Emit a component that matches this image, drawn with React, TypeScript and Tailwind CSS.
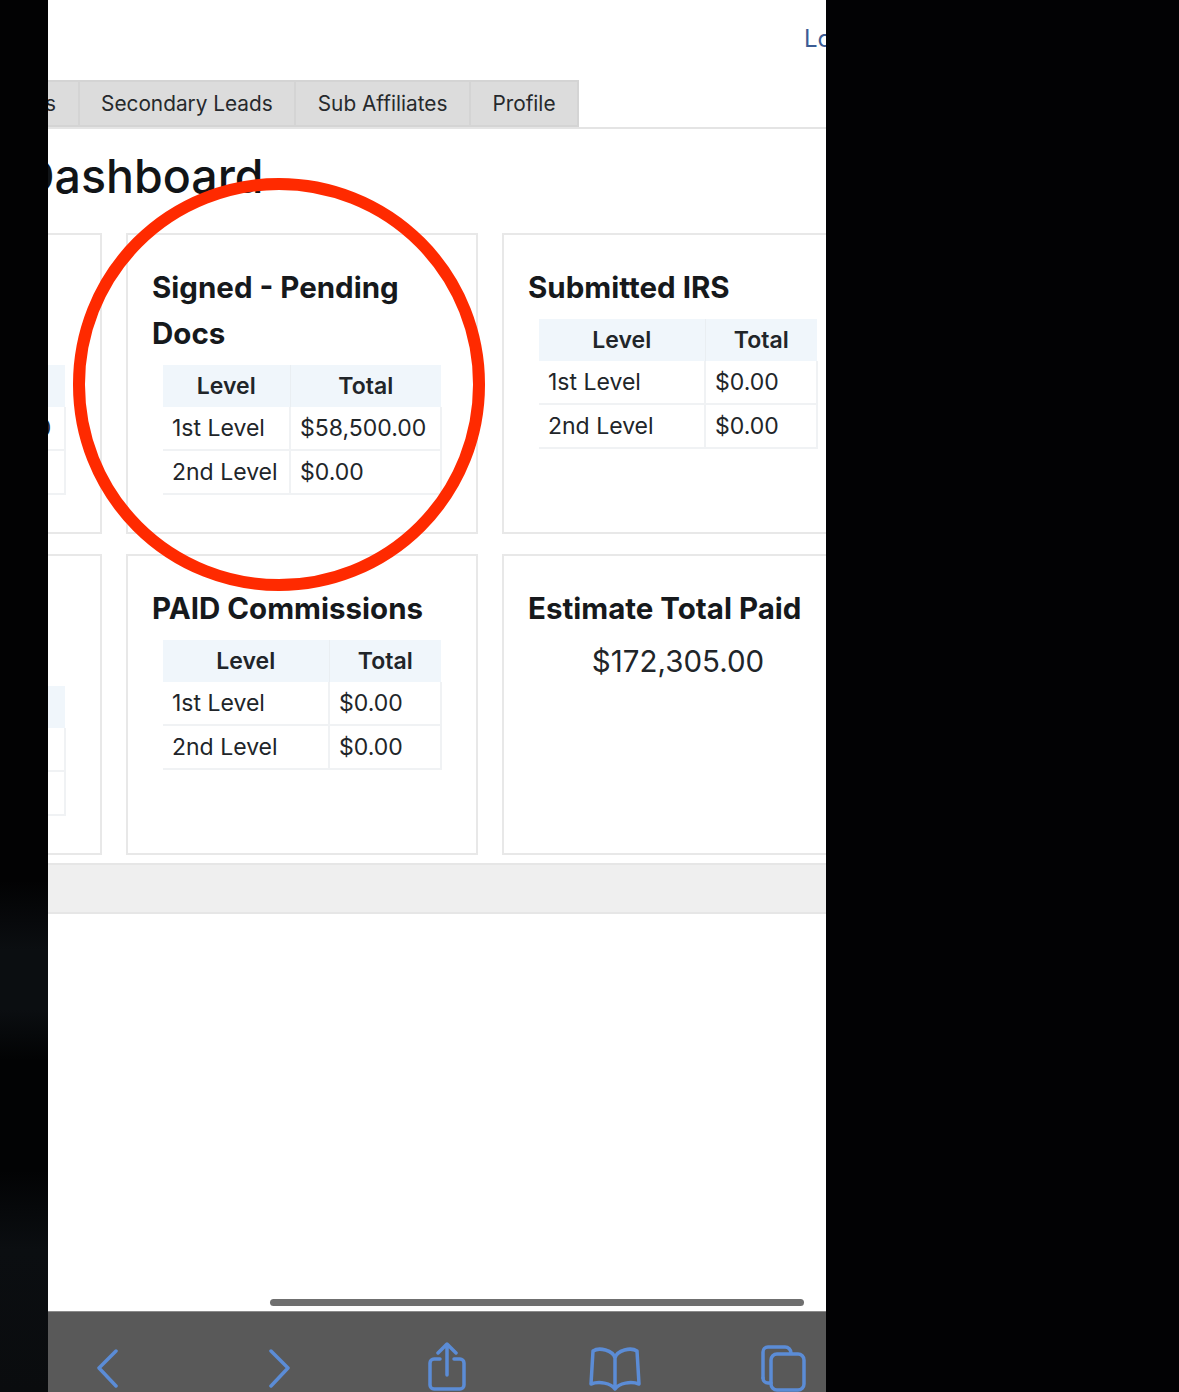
const FONT = "font-['Inter','Liberation_Sans',sans-serif]";

interface Row {
  level: string;
  total: string;
}

interface CardProps {
  title: string;
  rows: Row[];
  levelWidth: string;
}

function StatCard({ title, rows, levelWidth }: CardProps) {
  return (
    <div className="h-[301px] border-2 border-[#e8e8e8] bg-white pl-[24px] pr-[34px] pt-[29px]">
      <h3 className="text-[29.5px] font-bold leading-[46px] text-[#16191c]">{title}</h3>
      <table className="ml-[11px] mt-[9px] w-[279px] table-fixed border-collapse text-[23px] leading-[42px] text-[#212529]">
        <thead>
          <tr className="bg-[#f0f6fb]">
            <th className={`${levelWidth} border-r border-[#e9eef2] font-semibold`}>Level</th>
            <th className="font-semibold">Total</th>
          </tr>
        </thead>
        <tbody>
          {rows.map((row) => (
            <tr key={row.level} className="border-b-2 border-[#f0f2f4]">
              <td className="border-r-2 border-[#f0f2f4] px-[9px] whitespace-nowrap">{row.level}</td>
              <td className="border-r-2 border-[#f0f2f4] px-[9px] whitespace-nowrap">{row.total}</td>
            </tr>
          ))}
        </tbody>
      </table>
    </div>
  );
}

const zeroRows: Row[] = [
  { level: '1st Level', total: '$0.00' },
  { level: '2nd Level', total: '$0.00' },
];

const pendingRows: Row[] = [
  { level: '1st Level', total: '$58,500.00' },
  { level: '2nd Level', total: '$0.00' },
];

const tabClass =
  'border-2 border-[#d4d4d4] border-l-0 bg-[#dcdcdc] px-[21.5px] text-[20.8px] leading-[43px] text-[#26292c] whitespace-nowrap first:border-l-2';

function BrowserToolbar() {
  const icon = 'fill-none stroke-[#5b8cd6] stroke-[3.5] [stroke-linecap:round] [stroke-linejoin:round]';
  return (
    <div className="h-[81px] shrink-0 overflow-hidden border-t border-[#8a8a8a] bg-[#595959]">
      <div className="flex items-start pl-[46px] pt-[36px]">
        <svg width="26" height="40" viewBox="0 0 26 40" className={icon}>
          <path d="M22 3 5 20l17 18" />
        </svg>
        <svg width="26" height="40" viewBox="0 0 26 40" className={`${icon} ml-[146px]`}>
          <path d="M5 3l17 17-17 18" />
        </svg>
        <svg width="44" height="52" viewBox="0 0 44 52" className={`${icon} ml-[134px] -mt-[6px]`}>
          <path d="M14 17H8a4 4 0 0 0-4 4v22a4 4 0 0 0 4 4h26a4 4 0 0 0 4-4V21a4 4 0 0 0-4-4h-6" />
          <path d="M21 33V3M12 11l9-9 9 9" />
        </svg>
        <svg width="54" height="46" viewBox="0 0 54 46" className={`${icon} ml-[118px] -mt-[2px]`}>
          <path d="M27 12C25 4 11 1 5 5L3 38c8-3 20-1 24 5 4-6 16-8 24-5L49 5c-6-4-20-1-22 7Zm0 0v31" />
        </svg>
        <svg width="50" height="50" viewBox="0 0 50 50" className={`${icon} ml-[116px] -mt-[4px]`}>
          <path d="M5 34V8a5 5 0 0 1 5-5h17a6 6 0 0 1 6 6" />
          <path d="M5 34a5 5 0 0 0 5 5h3" />
          <rect x="13" y="10" width="33" height="36" rx="6" />
        </svg>
      </div>
    </div>
  );
}

export default function App() {
  return (
    <div className={`${FONT} flex h-[1392px] w-[1179px] overflow-hidden bg-[#020204]`}>
      <div className="w-[48px] shrink-0 bg-[linear-gradient(to_bottom,#020203_0,#020203_880px,#0b0e11_950px,#0b0e11_1010px,#020304_1060px,#020304_1170px,#0b0e11_1250px,#0a0c0e_1392px)]" />
      <main className="relative flex w-[778px] shrink-0 flex-col overflow-hidden bg-white">
        {/* Top link, cut off by the viewport */}
        <div className="h-[80px] overflow-hidden whitespace-nowrap pl-[756px] pt-[21px] text-[24px] leading-[36px] text-[#3b5c94]">
          Logout
        </div>

        {/* Tabs */}
        <nav className="border-b-2 border-[#e4e4e4]">
          <div className="-ml-[157px] flex h-[47px]">
            <span className={tabClass}>Primary Leads</span>
            <span className={tabClass}>Secondary Leads</span>
            <span className={tabClass}>Sub Affiliates</span>
            <span className={tabClass}>Profile</span>
          </div>
        </nav>

        <h1 className="-ml-[27px] mt-[19px] text-[46.5px] font-[450] leading-[56px] whitespace-nowrap text-[#111417]">
          Dashboard
        </h1>

        {/* Stat cards */}
        <div className="-ml-[298px] mt-[29px] grid w-[1104px] grid-cols-[352px_352px_352px] gap-x-[24px] gap-y-[20px]">
          <StatCard title="Sent - Awaiting Signature" rows={pendingRows} levelWidth="w-[128px]" />
          <StatCard title="Signed - Pending Docs" rows={pendingRows} levelWidth="w-[127px]" />
          <StatCard title="Submitted IRS" rows={zeroRows} levelWidth="w-[166px]" />
          <StatCard title="Estimate Total Commissions" rows={zeroRows} levelWidth="w-[166px]" />
          <StatCard title="PAID Commissions" rows={zeroRows} levelWidth="w-[166px]" />
          <div className="h-[301px] border-2 border-[#e8e8e8] bg-white pt-[29px]">
            <h3 className="pl-[24px] text-[29.5px] font-bold leading-[46px] text-[#16191c]">Estimate Total Paid</h3>
            <p className="mt-[7px] text-center text-[29.5px] leading-[46px] text-[#212529]">$172,305.00</p>
          </div>
        </div>

        <footer className="mt-[8px] h-[51px] shrink-0 border-y-2 border-[#e6e6e6] bg-[#efefef]" />
        <div className="flex-1" />

        {/* Horizontal scroll indicator */}
        <div className="absolute left-[222px] top-[1299px] h-[7px] w-[534px] rounded-full bg-[#6f6f6f]" />

        <BrowserToolbar />

        {/* Red hand-drawn highlight ring */}
        <div className="absolute left-[25px] top-[178px] h-[413px] w-[412px] rounded-full border-[12px] border-[#ff2a00]" />
      </main>
      <div className="flex-1" />
    </div>
  );
}
